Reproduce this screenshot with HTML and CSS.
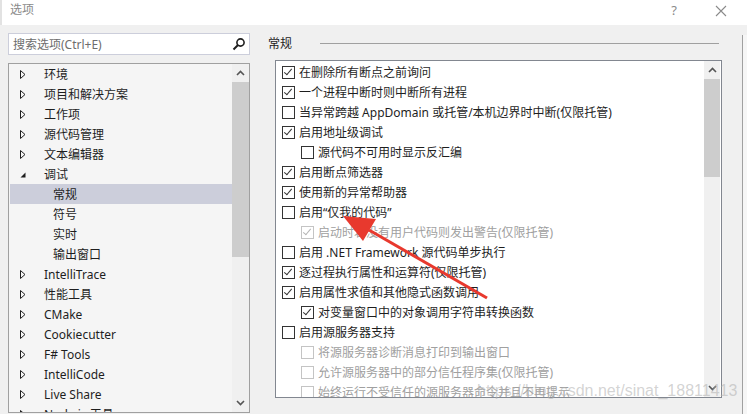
FILE: index.html
```html
<!DOCTYPE html>
<html lang="zh-CN">
<head>
<meta charset="utf-8">
<title>选项</title>
<link rel="stylesheet" href="styles.css">
</head>
<body>
<div class="titlebar">
  <span class="title">选项</span>
  <span class="help">?</span>
  <svg class="close" width="12" height="12" viewBox="0 0 12 12"><path d="M1 1L11 11M11 1L1 11" stroke="#8a8a8a" stroke-width="1.1" fill="none"/></svg>
</div>
<div class="main">
  <div class="left">
    <div class="search">
      <span class="ph">搜索选项(Ctrl+E)</span>
      <svg width="14" height="14" viewBox="0 0 14 14"><circle cx="8.5" cy="5.5" r="3.6" stroke="#1e1e1e" stroke-width="1.6" fill="none"/><path d="M6 8L1.5 12.5" stroke="#1e1e1e" stroke-width="2" fill="none"/></svg>
    </div>
    <div class="tree">
      <div class="tree-list">
        <div class="trow"><span class="tw"><svg width="6" height="9" viewBox="0 0 6 9"><path d="M0.5 0.5L5 4.5L0.5 8.5Z" stroke="#1e1e1e" fill="none"/></svg></span>环境</div>
        <div class="trow"><span class="tw"><svg width="6" height="9" viewBox="0 0 6 9"><path d="M0.5 0.5L5 4.5L0.5 8.5Z" stroke="#1e1e1e" fill="none"/></svg></span>项目和解决方案</div>
        <div class="trow"><span class="tw"><svg width="6" height="9" viewBox="0 0 6 9"><path d="M0.5 0.5L5 4.5L0.5 8.5Z" stroke="#1e1e1e" fill="none"/></svg></span>工作项</div>
        <div class="trow"><span class="tw"><svg width="6" height="9" viewBox="0 0 6 9"><path d="M0.5 0.5L5 4.5L0.5 8.5Z" stroke="#1e1e1e" fill="none"/></svg></span>源代码管理</div>
        <div class="trow"><span class="tw"><svg width="6" height="9" viewBox="0 0 6 9"><path d="M0.5 0.5L5 4.5L0.5 8.5Z" stroke="#1e1e1e" fill="none"/></svg></span>文本编辑器</div>
        <div class="trow"><span class="tw"><svg width="6" height="9" viewBox="0 0 6 9"><path d="M5.5 2.5L5.5 7.5L0.5 7.5Z" fill="#1e1e1e"/></svg></span>调试</div>
        <div class="trow child selected">常规</div>
        <div class="trow child">符号</div>
        <div class="trow child">实时</div>
        <div class="trow child">输出窗口</div>
        <div class="trow"><span class="tw"><svg width="6" height="9" viewBox="0 0 6 9"><path d="M0.5 0.5L5 4.5L0.5 8.5Z" stroke="#1e1e1e" fill="none"/></svg></span>IntelliTrace</div>
        <div class="trow"><span class="tw"><svg width="6" height="9" viewBox="0 0 6 9"><path d="M0.5 0.5L5 4.5L0.5 8.5Z" stroke="#1e1e1e" fill="none"/></svg></span>性能工具</div>
        <div class="trow"><span class="tw"><svg width="6" height="9" viewBox="0 0 6 9"><path d="M0.5 0.5L5 4.5L0.5 8.5Z" stroke="#1e1e1e" fill="none"/></svg></span>CMake</div>
        <div class="trow"><span class="tw"><svg width="6" height="9" viewBox="0 0 6 9"><path d="M0.5 0.5L5 4.5L0.5 8.5Z" stroke="#1e1e1e" fill="none"/></svg></span>Cookiecutter</div>
        <div class="trow"><span class="tw"><svg width="6" height="9" viewBox="0 0 6 9"><path d="M0.5 0.5L5 4.5L0.5 8.5Z" stroke="#1e1e1e" fill="none"/></svg></span>F# Tools</div>
        <div class="trow"><span class="tw"><svg width="6" height="9" viewBox="0 0 6 9"><path d="M0.5 0.5L5 4.5L0.5 8.5Z" stroke="#1e1e1e" fill="none"/></svg></span>IntelliCode</div>
        <div class="trow"><span class="tw"><svg width="6" height="9" viewBox="0 0 6 9"><path d="M0.5 0.5L5 4.5L0.5 8.5Z" stroke="#1e1e1e" fill="none"/></svg></span>Live Share</div>
        <div class="trow"><span class="tw"><svg width="6" height="9" viewBox="0 0 6 9"><path d="M0.5 0.5L5 4.5L0.5 8.5Z" stroke="#1e1e1e" fill="none"/></svg></span>Node.js 工具</div>
      </div>
      <div class="vscroll tree-scroll">
        <div class="arr"><svg width="9" height="6" viewBox="0 0 9 6"><path d="M1 5L4.5 1.5L8 5" stroke="#555" stroke-width="1.6" fill="none"/></svg></div>
        <div class="thumb"></div>
        <div class="track"></div>
        <div class="arr"><svg width="9" height="6" viewBox="0 0 9 6"><path d="M1 1L4.5 4.5L8 1" stroke="#555" stroke-width="1.6" fill="none"/></svg></div>
      </div>
    </div>
  </div>
  <div class="right">
    <div class="section-head"><span>常规</span><div class="rule"></div></div>
    <div class="panel">
      <div class="opts">
        <div class="opt"><span class="cb on"></span>在删除所有断点之前询问</div>
        <div class="opt"><span class="cb on"></span>一个进程中断时则中断所有进程</div>
        <div class="opt"><span class="cb"></span>当异常跨越 AppDomain 或托管/本机边界时中断(仅限托管)</div>
        <div class="opt"><span class="cb on"></span>启用地址级调试</div>
        <div class="opt sub"><span class="cb"></span>源代码不可用时显示反汇编</div>
        <div class="opt"><span class="cb on"></span>启用断点筛选器</div>
        <div class="opt"><span class="cb on"></span>使用新的异常帮助器</div>
        <div class="opt"><span class="cb"></span>启用“仅我的代码”</div>
        <div class="opt sub dis"><span class="cb on"></span>启动时若没有用户代码则发出警告(仅限托管)</div>
        <div class="opt"><span class="cb"></span>启用 .NET Framework 源代码单步执行</div>
        <div class="opt"><span class="cb on"></span>逐过程执行属性和运算符(仅限托管)</div>
        <div class="opt"><span class="cb on"></span>启用属性求值和其他隐式函数调用</div>
        <div class="opt sub"><span class="cb on"></span>对变量窗口中的对象调用字符串转换函数</div>
        <div class="opt"><span class="cb"></span>启用源服务器支持</div>
        <div class="opt sub dis"><span class="cb"></span>将源服务器诊断消息打印到输出窗口</div>
        <div class="opt sub dis"><span class="cb"></span>允许源服务器中的部分信任程序集(仅限托管)</div>
        <div class="opt sub dis"><span class="cb"></span>始终运行不受信任的源服务器命令并且不再提示</div>
      </div>
      <div class="vscroll panel-scroll">
        <div class="arr"><svg width="9" height="6" viewBox="0 0 9 6"><path d="M1 5L4.5 1.5L8 5" stroke="#555" stroke-width="1.6" fill="none"/></svg></div>
        <div class="thumb"></div>
        <div class="track"></div>
        <div class="arr"><svg width="9" height="6" viewBox="0 0 9 6"><path d="M1 1L4.5 4.5L8 1" stroke="#555" stroke-width="1.6" fill="none"/></svg></div>
      </div>
    </div>
  </div>
  <div class="edge"></div>
</div>
<svg class="annot" width="747" height="414" viewBox="0 0 747 414">
  <path d="M369 230L487 298" stroke="#e8392e" stroke-width="3" fill="none"/>
  <path d="M343 216L376 219L363 241Z" fill="#e8392e"/>
</svg>
<div class="watermark">https://blog.csdn.net/sinat_18811413</div>
</body>
</html>
```

FILE: styles.css
```css
html, body {
  margin: 0;
  padding: 0;
}
body {
  width: 747px;
  height: 414px;
  overflow: hidden;
  position: relative;
  background: #f0f0f0;
  font-family: "Noto Sans", "Noto Sans CJK SC", sans-serif;
  font-size: 12px;
  color: #1e1e1e;
}
.titlebar {
  height: 25px;
  background: #fff;
  display: flex;
  align-items: flex-start;
  border-left: 2px solid #e2e2e2;
  box-sizing: border-box;
}
.title {
  line-height: 20px;
  padding-left: 8px;
  color: #8a8a8a;
}
.help {
  margin-left: auto;
  line-height: 20px;
  color: #8a8a8a;
  font-size: 13px;
}
.close {
  margin: 5px 20px 0 38px;
}
.main {
  display: flex;
  padding: 8px 0 0 8px;
  height: 389px;
  box-sizing: border-box;
}
.left {
  width: 242px;
  display: flex;
  flex-direction: column;
  gap: 8px;
  flex: none;
}
.search {
  height: 22px;
  box-sizing: border-box;
  border: 1px solid #cccedb;
  background: #fff;
  display: flex;
  align-items: center;
  padding: 0 3px 0 4px;
}
.search .ph {
  color: #6d6d6d;
  flex: 1;
}
.tree {
  height: 350px;
  box-sizing: border-box;
  border: 1px solid #a0a0a0;
  background: #f5f5f5;
  display: flex;
  padding-left: 1px;
  overflow: hidden;
}
.tree-list {
  flex: 1;
  padding-top: 0;
}
.trow {
  height: 20px;
  display: flex;
  align-items: center;
  padding-left: 10px;
  white-space: nowrap;
}
.trow.child {
  padding-left: 43px;
}
.trow.selected {
  background: #cccedb;
}
.tw {
  width: 24px;
  flex: none;
  display: flex;
  align-items: center;
}
.vscroll {
  display: flex;
  flex-direction: column;
  background: #f0f0f0;
  flex: none;
}
.vscroll .arr {
  height: 18px;
  display: flex;
  align-items: center;
  justify-content: center;
  flex: none;
}
.vscroll .thumb {
  background: #cdcdcd;
  flex: none;
}
.vscroll .track {
  flex: 1;
}
.tree-scroll {
  width: 17px;
}
.tree-scroll .thumb {
  height: 175px;
}
.right {
  margin-left: 18px;
  width: 454px;
  flex: none;
  display: flex;
  flex-direction: column;
}
.section-head {
  height: 20px;
  display: flex;
  align-items: center;
  gap: 28px;
}
.section-head .rule {
  flex: 1;
  height: 1px;
  background: #a0a0a0;
  margin-right: 3px;
}
.panel {
  margin: 7px 0 0 7px;
  height: 338px;
  box-sizing: border-box;
  border: 1px solid #828790;
  background: #fff;
  display: flex;
  padding-right: 1px;
  overflow: hidden;
}
.opts {
  flex: 1;
  padding-top: 1px;
  overflow: hidden;
}
.opt {
  height: 20px;
  display: flex;
  align-items: center;
  padding-left: 6px;
  white-space: nowrap;
}
.opt.sub {
  padding-left: 25px;
}
.opt.dis {
  color: #a0a0a0;
}
.cb {
  width: 13px;
  height: 13px;
  box-sizing: border-box;
  border: 1px solid #333;
  background: #fff;
  flex: none;
  margin-right: 4px;
  position: relative;
}
.cb.on::after {
  content: "";
  position: absolute;
  left: 3px;
  top: 0px;
  width: 3px;
  height: 7px;
  border-right: 1.3px solid #333;
  border-bottom: 1.3px solid #333;
  transform: rotate(40deg);
}
.opt.dis .cb {
  border-color: #c4c4c4;
}
.opt.dis .cb.on::after {
  border-color: #b4b4b4;
}
.panel-scroll {
  width: 16px;
}
.panel-scroll .thumb {
  height: 98px;
}
.edge {
  margin: 2px 0 0 20px;
  flex: 1;
  border-left: 1px solid #a0a0a0;
  background: #f6f6f6;
}
.annot {
  position: absolute;
  left: 0;
  top: 0;
  pointer-events: none;
}
.watermark {
  position: absolute;
  left: 477px;
  top: 382px;
  font-family: "Liberation Sans", sans-serif;
  font-size: 16px;
  color: rgba(175, 175, 175, 0.55);
  white-space: nowrap;
}
```
